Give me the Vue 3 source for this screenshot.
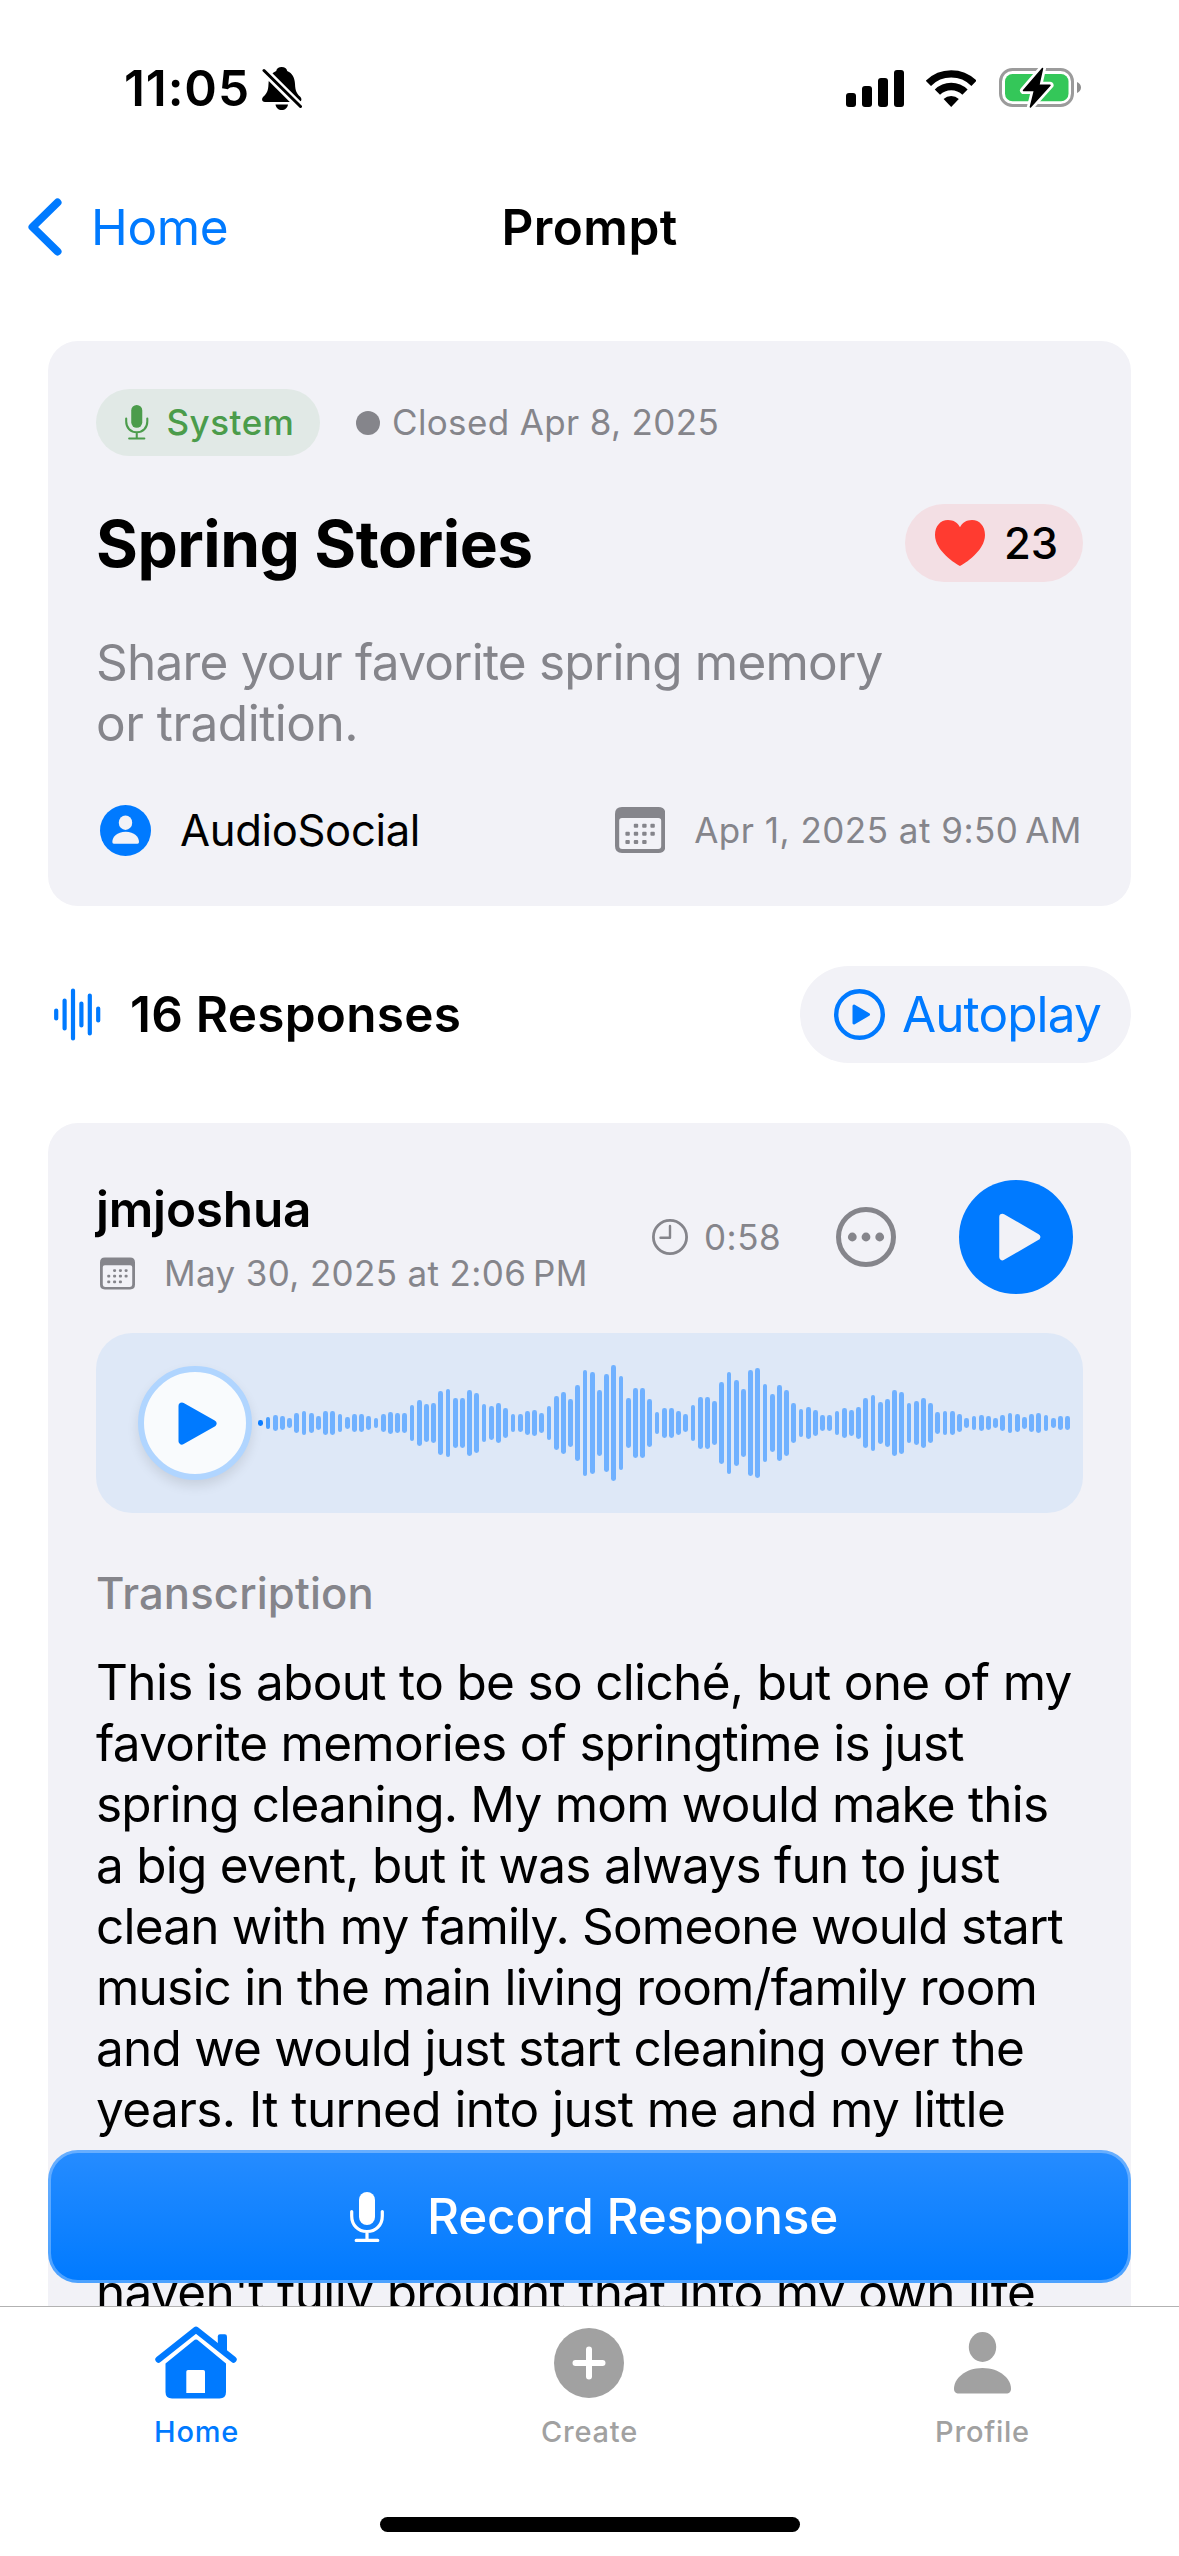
<script setup>
const levels = [
  6, 12, 16, 14, 10, 20, 24, 20, 14, 24, 24, 18, 12, 18, 18, 14, 10, 18, 22, 20, 20,
  36, 46, 38, 40, 64, 68, 50, 50, 66, 60, 38, 34, 40, 30, 18, 18, 24, 26, 20, 34, 54,
  62, 48, 76, 106, 102, 66, 98, 116, 94, 50, 70, 70, 48, 22, 30, 30, 24, 18, 36, 52,
  52, 44, 82, 102, 86, 68, 106, 110, 78, 58, 76, 66, 40, 28, 32, 26, 16, 16, 24, 30,
  26, 32, 50, 56, 42, 48, 66, 62, 40, 44, 50, 40, 22, 24, 24, 18, 10, 14, 16, 14, 10,
  16, 20, 18, 12, 18, 20, 16, 10, 14, 14,
]

const calendarDots = [
  [21, 18.7], [29.4, 18.7], [37.6, 18.7],
  [12.6, 26.8], [21, 26.8], [29.4, 26.8], [37.6, 26.8],
  [12.6, 35], [21, 35], [29.4, 35],
]

// Each transcript line with its tracking in pixels.
const transcript = [
  ['This is about to be so cliché, but one of my', -0.67],
  ['favorite memories of springtime is just', -0.72],
  ['spring cleaning. My mom would make this', -0.79],
  ['a big event, but it was always fun to just', -0.74],
  ['clean with my family. Someone would start', -0.8],
  ['music in the main living room/family room', -0.79],
  ['and we would just start cleaning over the', -0.76],
  ['years. It turned into just me and my little', -0.58],
  ['sister that do it and I feel like', -0.7],
  ['we still do it together, but I', -0.7],
  ["haven't fully brought that into my own life", -0.65],
]
</script>

<template>
  <div class="screen">
    <header class="status">
      <span class="time">11:05</span>
      <svg class="bell" viewBox="0 0 40 43" width="40" height="43">
        <path d="M19.7 0C16.800 0 14.600 1.600 14.200 4C9 6 6.800 11 6.500 17C6.200 24 4.800 26.500 1.500 29.500C-1 32 0 35 3 35H36.500C39.500 35 40.500 32 38 29.500C34.700 26.500 33.300 24 33 17C32.700 11 30.400 6 25.200 4C24.800 1.600 22.600 0 19.700 0Z" />
        <path d="M13.500 37.500H26C25.500 41 23 43 19.700 43S14 41 13.500 37.500Z" />
        <path d="M1 2.500L39 40.500" stroke="#fff" stroke-width="8" />
        <path d="M2 3.500L38.500 39.500" stroke="#000" stroke-width="3" stroke-linecap="round" />
      </svg>
      <svg class="signal" viewBox="0 0 58 37" width="58" height="37">
        <rect x="0" y="23" width="10" height="14" rx="3" />
        <rect x="16" y="16" width="10" height="21" rx="3" />
        <rect x="32" y="8" width="10" height="29" rx="3" />
        <rect x="48" y="0" width="10" height="37" rx="3" />
      </svg>
      <svg class="wifi" viewBox="0 0 50.400 37" width="50.400" height="37">
        <g fill="none" stroke="#000" stroke-width="7.400">
          <path d="M2.400 13.300A32.300 32.300 0 0 1 48 13.300" />
          <path d="M11.400 22.200A19.500 19.500 0 0 1 39 22.200" />
        </g>
        <path d="M17.600 29A11 11 0 0 1 32.800 29L25.200 37Z" />
      </svg>
      <svg class="battery" viewBox="0 0 83 42" width="83" height="42">
        <rect x="1.500" y="2.500" width="72" height="36" rx="12" fill="none" stroke="#9b9b9b" stroke-width="3" />
        <path d="M78 15C80.500 16 82 18 82 20.500S80.500 25 78 26Z" fill="#8e8e8e" />
        <rect x="6" y="7" width="63.500" height="27.300" rx="7.500" fill="#34c759" />
        <g stroke-linejoin="round">
          <path d="M43.500 1.500L24.500 23.500H35.500L31.400 40L51 18.200H39.800Z" fill="#fff" stroke="#fff" stroke-width="7" />
          <path d="M43.500 1.500L24.500 23.500H35.500L31.400 40L51 18.200H39.800Z" stroke="#000" stroke-width="1.500" />
        </g>
      </svg>
    </header>

    <nav class="nav">
      <div class="back">
        <svg viewBox="0 0 34 58" width="34" height="58">
          <path d="M29.500 4.500L4.500 29L29.500 53.500" fill="none" stroke="#007aff" stroke-width="8" stroke-linecap="round" stroke-linejoin="round" />
        </svg>
        <span>Home</span>
      </div>
      <h1>Prompt</h1>
      <div class="nav-end"></div>
    </nav>

    <main class="content">
      <section class="card prompt">
        <div class="tags">
          <span class="badge">
            <svg viewBox="0 0 34 50" width="23.500" height="34.500">
              <rect x="9" width="16" height="33" rx="8" fill="#4b9c4b" />
              <g fill="none" stroke="#4b9c4b" stroke-width="3" stroke-linecap="round">
                <path d="M1.700 19.500V24C1.700 33 8 39.500 17 39.500S32.300 33 32.300 24V19.500M17 40V48M6 48.500H28" />
              </g>
            </svg>
            System
          </span>
          <i class="dot"></i>
          <span class="closed">Closed Apr 8, 2025</span>
        </div>
        <div class="headline">
          <h2>Spring Stories</h2>
          <span class="likes">
            <svg viewBox="0 0 50 46" width="50" height="46">
              <path fill="#ff3b30" d="M25 46C21 44 0 31 0 15C0 6 5.500 0 13 0C18.500 0 23 2.800 25 7.300C27 2.800 31.500 0 37 0C44.500 0 50 6 50 15C50 31 29 44 25 46Z" />
            </svg>
            23
          </span>
        </div>
        <p class="desc">Share your favorite spring memory<br /><span class="desc-end">or tradition.</span></p>
        <div class="meta">
          <svg viewBox="0 0 51 51" width="51" height="51">
            <circle cx="25.500" cy="25.500" r="25.500" fill="#007aff" />
            <ellipse cx="25.500" cy="17.700" rx="6.700" ry="7.300" fill="#f2f2f7" />
            <path d="M12.300 37C12.300 32 17 26.700 25.700 26.700S39 32 39 37Q39 38.700 37.500 38.700H13.800Q12.300 38.700 12.300 37Z" fill="#f2f2f7" />
          </svg>
          <span class="author">AudioSocial</span>
          <svg class="cal" viewBox="0 0 50.400 46" width="50.400" height="46">
            <path fill="#85858b" fill-rule="evenodd" d="M7 0H43.400Q50.400 0 50.400 7V39Q50.400 46 43.400 46H7Q0 46 0 39V7Q0 0 7 0ZM7 11Q4.200 11 4.200 13.800V39Q4.200 42 7.200 42H43.200Q46.200 42 46.200 39V13.800Q46.200 11 43.400 11Z" />
            <rect v-for="(d, i) in calendarDots" :key="i" :x="d[0] - 2.200" :y="d[1] - 2" width="4.400" height="4" rx="1" fill="#85858b" />
          </svg>
          <span class="stamp">Apr 1, 2025 at 9:50&#8239;AM</span>
        </div>
      </section>

      <div class="section-head">
        <svg viewBox="0 0 48 53" width="48" height="53">
          <path d="M3.200 22.500V30.500M11.600 12.500V40.500M20 2.500V50.500M28.400 15.500V37.500M36.800 7.500V45.500M45.200 20.500V32.500" stroke="#007aff" stroke-width="4.200" stroke-linecap="round" />
        </svg>
        <h3>16 Responses</h3>
        <span class="autoplay">
          <svg viewBox="0 0 51 51" width="51" height="51">
            <circle cx="25.500" cy="25.500" r="23.300" fill="none" stroke="#007aff" stroke-width="4.400" />
            <path d="M20 17L34.500 25.500L20 34Z" fill="#007aff" stroke="#007aff" stroke-width="3" stroke-linejoin="round" />
          </svg>
          <span>Autoplay</span>
        </span>
      </div>

      <section class="card response">
        <div class="resp-head">
          <div class="who">
            <h3>jmjoshua</h3>
            <div class="when">
              <svg viewBox="0 0 50.400 46" width="35" height="33">
                <path fill="#85858b" fill-rule="evenodd" d="M7 0H43.400Q50.400 0 50.400 7V39Q50.400 46 43.400 46H7Q0 46 0 39V7Q0 0 7 0ZM7 11Q4 11 4 13.800V39Q4 42.500 7.200 42.500H43.200Q46.400 42.500 46.400 39V13.800Q46.400 11 43.400 11Z" />
                <rect v-for="(d, i) in calendarDots" :key="i" :x="d[0] - 2.200" :y="d[1] - 2" width="4.400" height="4" rx="1.500" fill="#85858b" />
              </svg>
              <span>May 30, 2025 at 2:06&#8239;PM</span>
            </div>
          </div>
          <svg class="clock" viewBox="0 0 36 36" width="36" height="36">
            <circle cx="18" cy="18" r="16.600" fill="none" stroke="#85858b" stroke-width="2.800" />
            <path d="M18 7V18.700H8.500" fill="none" stroke="#85858b" stroke-width="2.400" stroke-linecap="round" stroke-linejoin="round" />
          </svg>
          <span class="length">0:58</span>
          <svg class="more" viewBox="0 0 60 60" width="60" height="60">
            <circle cx="30" cy="30" r="27.500" fill="none" stroke="#85858b" stroke-width="5" />
            <g fill="#85858b">
              <circle cx="16.300" cy="30" r="4.400" />
              <circle cx="30" cy="30" r="4.400" />
              <circle cx="43.700" cy="30" r="4.400" />
            </g>
          </svg>
          <svg class="play" viewBox="0 0 114 114" width="114" height="114">
            <circle cx="57" cy="57" r="57" fill="#007aff" />
            <path d="M43.500 37L78 57L43.500 77Z" fill="#f2f2f7" stroke="#f2f2f7" stroke-width="6.500" stroke-linejoin="round" />
          </svg>
        </div>

        <div class="player">
          <div class="knob">
            <svg viewBox="0 0 39 43" width="39" height="43">
              <path d="M4 4L35 21.500L4 39Z" fill="#007aff" stroke="#007aff" stroke-width="7" stroke-linejoin="round" />
            </svg>
          </div>
          <div class="wave">
            <i v-for="(h, i) in levels" :key="i" :style="{ height: h + 'px' }"></i>
          </div>
        </div>

        <h4>Transcription</h4>
        <p class="transcript">
          <span v-for="[line, tracking] in transcript" :key="line" :style="{ letterSpacing: tracking + 'px' }">{{ line }}</span>
        </p>
      </section>

      <button class="record">
        <svg viewBox="0 0 34 50" width="34" height="50">
          <rect x="9" width="16" height="33" rx="8" fill="#fff" />
          <path d="M1.700 19.500V24C1.700 33 8 39.500 17 39.500S32.300 33 32.300 24V19.500M17 40V48M6.200 48.400H27.800" fill="none" stroke="#fff" stroke-width="3.200" stroke-linecap="round" />
        </svg>
        <span>Record Response</span>
      </button>
    </main>

    <footer class="tabs">
      <div class="tab-row">
        <div class="tab active">
          <svg viewBox="0 0 82 73" width="82" height="73">
            <path d="M3.500 33.500L41 3.800L78.500 33.500" fill="none" stroke="#007aff" stroke-width="6.400" stroke-linecap="round" stroke-linejoin="round" />
            <path d="M62.800 22V10.500Q62.800 8.300 65 8.300H69.800Q72 8.300 72 10.500V30Z" fill="#007aff" />
            <path fill="#007aff" fill-rule="evenodd" d="M38.500 14.700Q41 12.500 43.500 14.700L71 37.500V66Q71 72.500 64.500 72.500H17Q10.500 72.500 10.500 66V37.500ZM33 44Q31.300 44 31.300 45.700V67H50V45.700Q50 44 48.300 44Z" />
          </svg>
          <span>Home</span>
        </div>
        <div class="tab create">
          <svg viewBox="0 0 70 70" width="70" height="70">
            <circle cx="35" cy="35" r="35" fill="#a1a1a1" />
            <path d="M35 21.500V48.500M21.500 35H48.500" stroke="#fff" stroke-width="6" stroke-linecap="round" />
          </svg>
          <span>Create</span>
        </div>
        <div class="tab profile">
          <svg viewBox="0 0 57 62" width="57" height="62">
            <ellipse cx="28.500" cy="15" rx="13.700" ry="15" fill="#a1a1a1" />
            <path d="M0 56.500C0 47 11 36 28.500 36S57 47 57 56.500C57 60 55.500 61.500 52 61.500H5C1.500 61.500 0 60 0 56.500Z" fill="#a1a1a1" />
          </svg>
          <span>Profile</span>
        </div>
      </div>
      <div class="indicator"></div>
    </footer>
  </div>
</template>

<style>
body {
  margin: 0;
  background: #fff;
}
</style>

<style scoped>
.screen {
  width: 1179px;
  height: 2556px;
  display: flex;
  flex-direction: column;
  overflow: hidden;
  background: #fff;
  color: #000;
  font-family: Inter, "Liberation Sans", sans-serif;
  font-size: 49.5px;
  line-height: 61px;
  white-space: nowrap;
}
h1, h2, h3, h4, p {
  margin: 0;
  font-size: inherit;
  font-weight: 600;
}
p {
  font-weight: 400;
}
svg {
  display: block;
  flex: none;
}

.status {
  height: 176px;
  display: flex;
  align-items: center;
  box-sizing: border-box;
  padding: 0 97px 0 124px;
}
.time {
  width: 138px;
  font-weight: 600;
  letter-spacing: 0.9px;
}
.signal {
  margin-left: auto;
}
.wifi {
  margin-left: 22px;
}
.battery {
  margin-left: 23px;
}

.nav {
  height: 102px;
  display: flex;
  align-items: center;
  padding: 0 28px;
}
.nav h1 {
  letter-spacing: 0.45px;
}
.back,
.nav-end {
  flex: 1;
}
.back {
  display: flex;
  align-items: center;
  gap: 29px;
  color: #007aff;
  letter-spacing: -0.4px;
}

.content {
  position: relative;
  flex: 1;
  min-height: 0;
  overflow: hidden;
  padding: 63px 48px 0;
}
.card {
  box-sizing: border-box;
  padding: 48px;
  border-radius: 30px;
  background: #f2f2f7;
}
.prompt {
  height: 565px;
}
.tags {
  display: flex;
  align-items: center;
  height: 67px;
  font-size: 35px;
  color: #85858b;
}
.badge {
  display: flex;
  align-items: center;
  box-sizing: border-box;
  width: 224px;
  height: 67px;
  padding-left: 29px;
  gap: 18px;
  border-radius: 34px;
  background: #e1e9e6;
  color: #4b9c4b;
  font-weight: 500;
  letter-spacing: 0.5px;
}
.dot {
  width: 24px;
  height: 24px;
  margin: 0 12px 0 36px;
  border-radius: 50%;
  background: #85858b;
}
.closed {
  letter-spacing: 0.36px;
}
.headline {
  display: flex;
  align-items: center;
  justify-content: space-between;
  height: 78px;
  margin-top: 48px;
}
h2 {
  font-size: 64px;
  font-weight: 700;
  letter-spacing: -0.48px;
}
.likes {
  display: flex;
  align-items: center;
  box-sizing: border-box;
  width: 178px;
  height: 78px;
  padding-left: 30px;
  gap: 19px;
  border-radius: 39px;
  background: #f3dfe4;
  font-size: 43.6px;
  font-weight: 500;
}
.desc {
  margin-top: 50px;
  color: #85858b;
  letter-spacing: -0.79px;
}
.desc-end {
  letter-spacing: -0.5px;
}
.meta {
  display: flex;
  align-items: center;
  height: 56px;
  margin-top: 48px;
  padding-left: 4px;
}
.author {
  margin-left: 29px;
  font-size: 43.6px;
  letter-spacing: -0.35px;
}
.cal {
  margin-left: auto;
}
.stamp {
  margin-left: 29px;
  margin-right: 1px;
  color: #85858b;
  font-size: 35px;
  letter-spacing: 0.5px;
}

.section-head {
  display: flex;
  align-items: center;
  height: 97px;
  margin: 60px 0;
  padding-left: 5px;
}
.section-head h3 {
  margin-left: 29px;
  letter-spacing: 0.25px;
}
.autoplay {
  display: flex;
  align-items: center;
  box-sizing: border-box;
  width: 331px;
  height: 97px;
  margin-left: auto;
  padding-left: 34px;
  gap: 17px;
  border-radius: 49px;
  background: #f2f2f7;
  color: #007aff;
  letter-spacing: -0.9px;
}

.response {
  height: 1400px;
}
.resp-head {
  display: flex;
  align-items: center;
  height: 132px;
  padding-right: 10px;
}
.who {
  flex: 1;
}
.who h3 {
  letter-spacing: -0.2px;
}
.when {
  display: flex;
  align-items: center;
  gap: 29px;
  height: 45px;
  margin-top: 11px;
  padding-left: 4px;
  font-size: 35px;
  color: #85858b;
  letter-spacing: 0.36px;
}
.length {
  width: 76px;
  margin-left: 16px;
  color: #85858b;
  font-size: 35px;
  letter-spacing: 0.5px;
}
.more {
  margin-left: 56px;
}
.play {
  margin-left: 63px;
}

.player {
  display: flex;
  align-items: center;
  box-sizing: border-box;
  height: 180px;
  margin-top: 30px;
  padding-left: 42px;
  border-radius: 36px;
  background: #dee8f7;
}
.knob {
  display: flex;
  align-items: center;
  justify-content: center;
  box-sizing: border-box;
  width: 114px;
  height: 114px;
  padding-left: 4px;
  border: 6px solid #b0d5ff;
  border-radius: 50%;
  background: #f9fbfd;
  box-shadow: 0 6px 12px rgba(0, 0, 0, 0.1);
}
.wave {
  display: flex;
  align-items: center;
  gap: 2.41px;
  height: 120px;
  margin-left: 6.4px;
}
.wave i {
  flex: none;
  width: 4.8px;
  border-radius: 2.4px;
  background: #70b1ff;
}
.wave i:nth-child(1) {
  background: #0a7cff;
}
.wave i:nth-child(2) {
  background: #4a9fff;
}
h4 {
  margin-top: 53px;
  color: #85858b;
  font-size: 43.6px;
  font-weight: 500;
  letter-spacing: 0.15px;
  line-height: 56px;
}
.transcript {
  margin-top: 30px;
}
.transcript span {
  display: block;
}

.record {
  position: absolute;
  left: 48px;
  bottom: 23px;
  width: 1083px;
  height: 133px;
  display: flex;
  align-items: center;
  box-sizing: border-box;
  padding: 0 0 0 299px;
  gap: 43px;
  border: 3px solid rgba(255, 255, 255, 0.3);
  border-radius: 30px;
  background: linear-gradient(#268cff, #007aff) border-box;
  color: #fff;
  font: 500 49.5px/61px Inter, "Liberation Sans", sans-serif;
  letter-spacing: -0.2px;
}

.tabs {
  box-sizing: border-box;
  height: 250px;
  border-top: 1px solid #b2b2b2;
}
.tab-row {
  display: flex;
  height: 146px;
}
.tab {
  flex: 1;
  display: flex;
  flex-direction: column;
  align-items: center;
  justify-content: flex-end;
  height: 145px;
  color: #a1a1a1;
  font-size: 29px;
  font-weight: 500;
  letter-spacing: 0.75px;
}
.tab svg {
  margin: auto 1px 0 0;
}
.tab span {
  margin-top: 13px;
  line-height: 40px;
}
.active {
  color: #007aff;
}
.active svg {
  margin-right: 2px;
}
.create span {
  margin-top: 14px;
}
.profile span {
  margin-top: 18px;
}
.indicator {
  width: 420px;
  height: 15px;
  margin: 64px auto 0;
  border-radius: 8px;
  background: #000;
}
</style>
